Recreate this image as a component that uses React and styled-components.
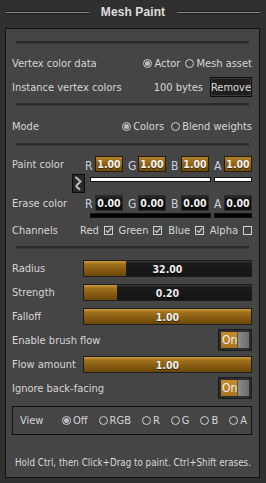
import React from "react";
import styled, { createGlobalStyle } from "styled-components";

const Global = createGlobalStyle`
  html, body { margin: 0; padding: 0; background: #303030; }
  body { font-family: "DejaVu Sans Condensed", "Liberation Sans", Arial, sans-serif; font-size: 11px; color: #d6d6d6; }
  * { box-sizing: border-box; }
`;

const Page = styled.div`
  width: 266px;
  height: 483px;
  background: #303030;
  display: flex;
  flex-direction: column;
  padding: 0 6px 0 5px;
`;

const Header = styled.div`
  height: 28px;
  display: flex;
  align-items: center;
  gap: 12px;
  padding: 0 0 4px 1px;
`;

const HeaderLine = styled.div`
  flex: 1;
  height: 1px;
  background: #8e8e8e;
  box-shadow: 0 -1px 0 #1c1c1c, 0 1px 0 #1c1c1c;
`;

const Title = styled.div`
  font-family: "Liberation Sans", Arial, sans-serif;
  font-weight: bold;
  font-size: 12px;
  color: #dedede;
  letter-spacing: 0.1px;
`;

const Panel = styled.div`
  height: 450px;
  background: #454545;
  border: 1px solid #111;
  display: flex;
  flex-direction: column;
  padding: 12px 7px 0 6px;
`;

const Sep = styled.div`
  height: 3px;
  margin: ${(p) => p.$mt || 0}px 3px ${(p) => p.$mb || 0}px 4px;
  background: #2b2b2b;
  border-bottom: 1px solid #3a3a3a;
  flex: none;
`;

const Row = styled.div`
  height: ${(p) => p.$h || 24}px;
  display: flex;
  align-items: center;
  flex: none;
`;

const Label = styled.div`
  flex: 1;
  white-space: nowrap;
  padding-top: 1px;
`;

const RadioGroup = styled.div`
  display: flex;
  align-items: center;
  gap: ${(p) => p.$gap || 5}px;
`;

const SpreadRadios = styled.div`
  flex: 1;
  display: flex;
  align-items: center;
  justify-content: space-between;
  padding-right: 4px;
`;

const RadioItem = styled.label`
  display: flex;
  align-items: center;
  gap: 2px;
  white-space: nowrap;
`;

const Circle = styled.span`
  width: 9px;
  height: 9px;
  border-radius: 50%;
  border: 1px solid #cfcfcf;
  display: inline-flex;
  align-items: center;
  justify-content: center;
  &::after {
    content: "";
    width: 5px;
    height: 5px;
    border-radius: 50%;
    background: ${(p) => (p.$on ? "#bdbdbd" : "transparent")};
  }
`;

const Radio = ({ on, children }) => (
  <RadioItem>
    <Circle $on={on} />
    {children}
  </RadioItem>
);

const Bytes = styled.div`
  margin-right: 7px;
`;

const Button = styled.div`
  width: 42px;
  height: 20px;
  background: #1f1f1f;
  border: 1px solid #0c0c0c;
  box-shadow: inset 0 0 0 1px #3a3a3a;
  display: flex;
  align-items: center;
  justify-content: center;
  color: #dcdcdc;
`;

const ColorGroup = styled.div`
  width: 167px;
  display: grid;
  grid-template-columns: repeat(4, 38px);
  column-gap: 5px;
`;

const Chan = styled.div`
  display: flex;
  align-items: center;
`;

const ChanLetter = styled.span`
  width: 10px;
  color: #c9d2dc;
  font-size: 12px;
  padding-top: 3px;
`;

const Field = styled.div`
  width: 28px;
  height: 16px;
  border: 1px solid ${(p) => (p.$gold ? "#2a1b02" : "#2c2c2c")};
  background: ${(p) =>
    p.$gold
      ? "linear-gradient(#b3822a 0%, #8d6213 50%, #6e4a0a 100%)"
      : "linear-gradient(#2a2a2a 0%, #121212 30%, #0e0e0e 100%)"};
  color: #f2f2f2;
  font-weight: bold;
  font-size: 10.5px;
  display: flex;
  align-items: center;
  justify-content: center;
  text-shadow: 0 1px 0 rgba(0, 0, 0, 0.5);
`;

const SwatchRow = styled.div`
  height: ${(p) => p.$h}px;
  display: flex;
  align-items: flex-start;
  padding-left: ${(p) => p.$pl}px;
  flex: none;
`;

const Swatch = styled.div`
  height: 5px;
  width: ${(p) => p.$w}px;
  margin-top: ${(p) => p.$mt}px;
  margin-left: ${(p) => p.$ml || 0}px;
  background: ${(p) => p.$c};
  border: 1px solid #101010;
`;

const SwapBox = styled.div`
  width: 13px;
  height: 19px;
  background: #2a2a2a;
  border: 1px solid #0b0b0b;
  display: flex;
  align-items: center;
  justify-content: center;
`;

const Checks = styled.div`
  width: 172px;
  display: flex;
  justify-content: space-between;
  align-items: center;
`;

const CheckItem = styled.label`
  display: flex;
  align-items: center;
  gap: 5px;
`;

const Box = styled.span`
  width: 9px;
  height: 9px;
  border: 1px solid #cfcfcf;
  display: inline-flex;
  align-items: center;
  justify-content: center;
`;

const Check = ({ on, children }) => (
  <CheckItem>
    {children}
    <Box>
      {on && (
        <svg width="7" height="7" viewBox="0 0 7 7">
          <path d="M0.8 3.4 L2.8 5.4 L6.4 1" fill="none" stroke="#d0d0d0" strokeWidth="1.2" />
        </svg>
      )}
    </Box>
  </CheckItem>
);

const Track = styled.div`
  position: relative;
  width: 169px;
  height: 17px;
  background: linear-gradient(#3c3c3c 0px, #1c1c1c 2px, #141414 100%);
  border: 1px solid #1d1d1d;
  display: flex;
  align-items: center;
  justify-content: center;
  overflow: hidden;
`;

const Fill = styled.div`
  position: absolute;
  left: 0;
  top: 0;
  bottom: 0;
  background: linear-gradient(#c9993a 0%, #a2731e 20%, #8a5e12 55%, #694608 100%);
`;

const Value = styled.span`
  position: relative;
  font-weight: bold;
  font-size: 10.5px;
  color: #ececec;
  text-shadow: 0 1px 0 rgba(0, 0, 0, 0.6);
  padding-top: 1px;
`;

const Slider = ({ value, frac }) => (
  <Track>
    <Fill style={{ width: `${frac * 100}%` }} />
    <Value>{value}</Value>
  </Track>
);

const ToggleBox = styled.div`
  width: 34px;
  height: 22px;
  border: 1px solid #1a1a1a;
  background: #2e2e2e;
  padding: 2px;
  display: flex;
`;

const ToggleOn = styled.div`
  flex: 1;
  background: linear-gradient(#c58c2c, #a8741c);
  color: #f0f0f0;
  font-size: 12px;
  display: flex;
  align-items: center;
  padding-left: 1px;
`;

const Knob = styled.div`
  width: 12px;
  background: linear-gradient(90deg, #8a8a8a, #6c6c6c);
  border-left: 1px solid #555;
`;

const Toggle = () => (
  <ToggleBox>
    <ToggleOn>On</ToggleOn>
    <Knob />
  </ToggleBox>
);

const ViewBox = styled.div`
  margin-top: 6px;
  height: 29px;
  border: 1px solid #0e0e0e;
  display: flex;
  align-items: center;
  padding: 0 0 0 7px;
  flex: none;
`;

const ViewLabel = styled.div`
  width: 42px;
`;

const Footer = styled.div`
  margin-top: 22px;
  height: 12px;
  line-height: 12px;
  font-size: 9.75px;
  padding-left: 3px;
  white-space: nowrap;
  color: #d8d8d8;
`;

export default function App() {
  return (
    <>
      <Global />
      <Page>
        <Header>
          <HeaderLine />
          <Title>Mesh Paint</Title>
          <HeaderLine />
        </Header>
        <Panel>
          <Sep $mb={7} />
          <Row>
            <Label>Vertex color data</Label>
            <RadioGroup $gap={5}>
              <Radio on>Actor</Radio>
              <Radio>Mesh asset</Radio>
            </RadioGroup>
          </Row>
          <Row>
            <Label>Instance vertex colors</Label>
            <Bytes>100 bytes</Bytes>
            <Button>Remove</Button>
          </Row>
          <Sep $mt={4} $mb={8} />
          <Row>
            <Label>Mode</Label>
            <RadioGroup $gap={7}>
              <Radio on>Colors</Radio>
              <Radio>Blend weights</Radio>
            </RadioGroup>
          </Row>
          <Sep $mt={5} $mb={8} />
          <Row $h={20}>
            <Label>Paint color</Label>
            <ColorGroup>
              {["R", "G", "B", "A"].map((c) => (
                <Chan key={c}>
                  <ChanLetter>{c}</ChanLetter>
                  <Field $gold>1.00</Field>
                </Chan>
              ))}
            </ColorGroup>
          </Row>
          <SwatchRow $h={19} $pl={60}>
            <SwapBox>
              <svg width="9" height="15" viewBox="0 0 9 15">
                <path d="M2 1.5 L6.5 5.5 L3 9 Q1.8 10.3 3.2 11.4 L5.5 13.2" fill="none" stroke="#bdbdbd" strokeWidth="2" strokeLinecap="round" strokeLinejoin="round" />
              </svg>
            </SwapBox>
            <Swatch $w={126} $mt={3} $ml={5} $c="#ffffff" />
            <Swatch $w={40} $mt={3} $ml={3} $c="#ffffff" />
          </SwatchRow>
          <Row $h={19}>
            <Label>Erase color</Label>
            <ColorGroup>
              {["R", "G", "B", "A"].map((c) => (
                <Chan key={c}>
                  <ChanLetter>{c}</ChanLetter>
                  <Field>0.00</Field>
                </Chan>
              ))}
            </ColorGroup>
          </Row>
          <SwatchRow $h={6} $pl={78}>
            <Swatch $w={126} $mt={1} $c="#000000" />
            <Swatch $w={40} $mt={1} $ml={3} $c="#000000" />
          </SwatchRow>
          <Row>
            <Label>Channels</Label>
            <Checks>
              <Check on>Red</Check>
              <Check on>Green</Check>
              <Check on>Blue</Check>
              <Check>Alpha</Check>
            </Checks>
          </Row>
          <Sep $mt={4} $mb={7} />
          <Row>
            <Label>Radius</Label>
            <Slider value="32.00" frac={0.25} />
          </Row>
          <Row>
            <Label>Strength</Label>
            <Slider value="0.20" frac={0.2} />
          </Row>
          <Row>
            <Label>Falloff</Label>
            <Slider value="1.00" frac={1} />
          </Row>
          <Row>
            <Label>Enable brush flow</Label>
            <Toggle />
          </Row>
          <Row>
            <Label>Flow amount</Label>
            <Slider value="1.00" frac={1} />
          </Row>
          <Row>
            <Label>Ignore back-facing</Label>
            <Toggle />
          </Row>
          <ViewBox>
            <ViewLabel>View</ViewLabel>
            <SpreadRadios>
              <Radio on>Off</Radio>
              <Radio>RGB</Radio>
              <Radio>R</Radio>
              <Radio>G</Radio>
              <Radio>B</Radio>
              <Radio>A</Radio>
            </SpreadRadios>
          </ViewBox>
          <Footer>Hold Ctrl, then Click+Drag to paint. Ctrl+Shift erases.</Footer>
        </Panel>
      </Page>
    </>
  );
}
